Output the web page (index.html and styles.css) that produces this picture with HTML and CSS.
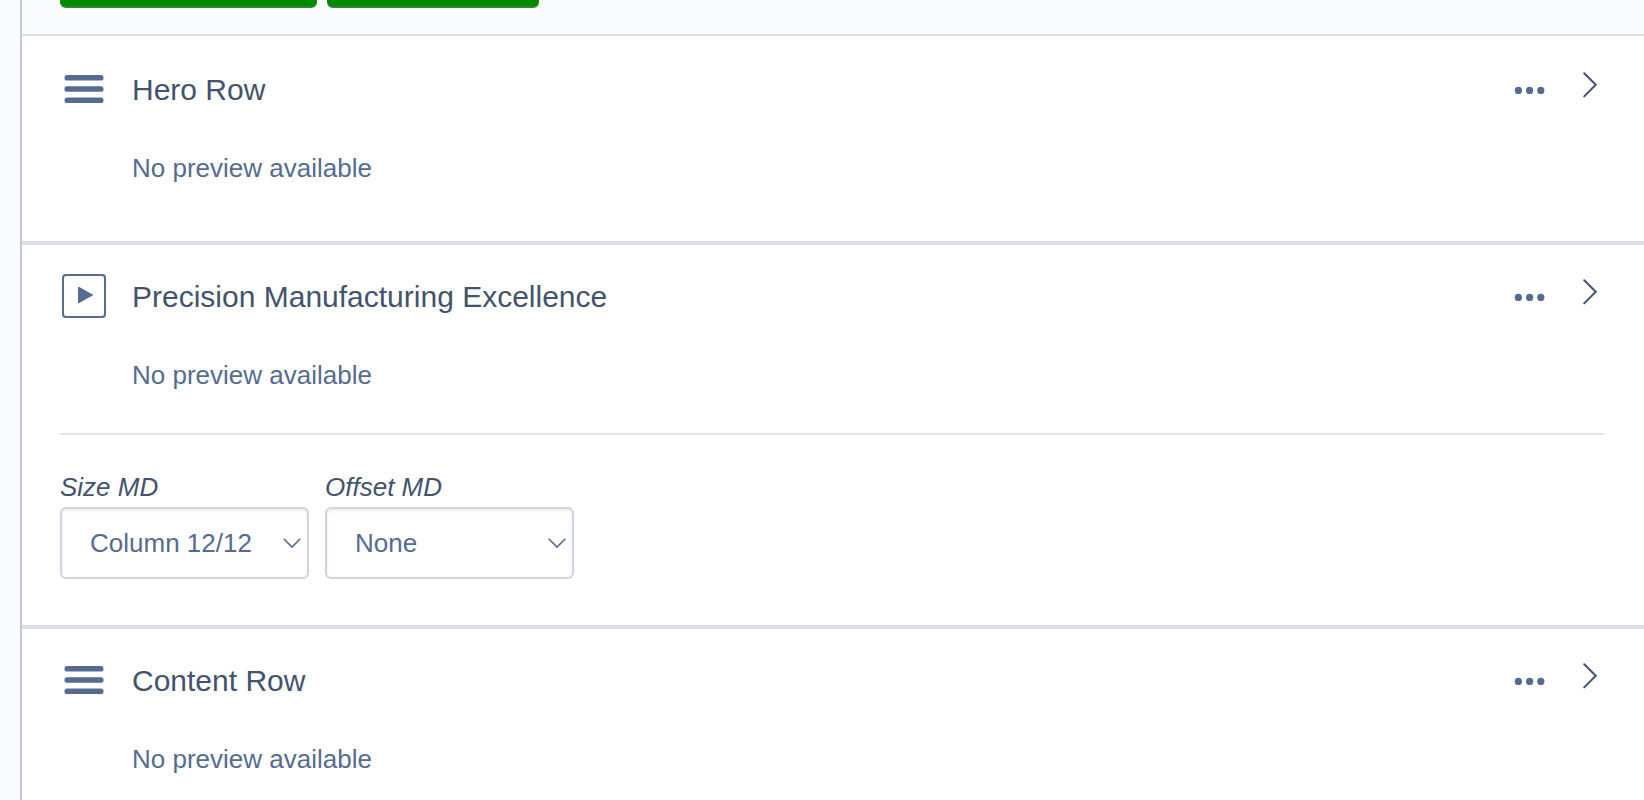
FILE: index.html
```html
<!DOCTYPE html>
<html lang="en">
<head>
    <meta charset="utf-8">
    <title>Page modules</title>
    <link rel="stylesheet" href="styles.css">
</head>

<body>
    <main class="panel">

        <div class="toolbar">
            <button type="button" class="add-button add-row" aria-label="Add row"></button>
            <button type="button" class="add-button add-module" aria-label="Add module"></button>
        </div>

        <div class="rows">

            <section class="row">
                <div class="row-head">
                    <svg class="row-icon" viewBox="0 0 48 44">
                        <rect x="4.5" y="8" width="39" height="5.6" rx="2.6"/>
                        <rect x="4.5" y="19.2" width="39" height="5.6" rx="2.6"/>
                        <rect x="4.5" y="30.4" width="39" height="5.6" rx="2.6"/>
                    </svg>
                    <h2 class="row-title">Hero Row</h2>
                    <button type="button" class="icon-button" aria-label="More">
                        <svg class="dots" viewBox="0 0 34 44">
                            <circle cx="6.4" cy="23.4" r="3.6"/>
                            <circle cx="17.6" cy="23.4" r="3.6"/>
                            <circle cx="28.8" cy="23.4" r="3.6"/>
                        </svg>
                    </button>
                    <button type="button" class="icon-button" aria-label="Open">
                        <svg class="chevron" viewBox="0 0 32 44"><path d="M12.2 6.2 L23.8 17.8 L12.2 29.4"/></svg>
                    </button>
                </div>
                <p class="preview">No preview available</p>
            </section>

            <section class="row">
                <div class="row-head">
                    <svg class="row-icon" viewBox="0 0 48 44">
                        <rect class="frame" x="3" y="1" width="42" height="42" rx="3"/>
                        <path d="M18 13.6 Q18 12.4 19.2 13 L32.6 20.4 Q33.6 21 32.6 21.6 L19.2 29 Q18 29.6 18 28.4 Z"/>
                    </svg>
                    <h2 class="row-title">Precision Manufacturing Excellence</h2>
                    <button type="button" class="icon-button" aria-label="More">
                        <svg class="dots" viewBox="0 0 34 44">
                            <circle cx="6.4" cy="23.4" r="3.6"/>
                            <circle cx="17.6" cy="23.4" r="3.6"/>
                            <circle cx="28.8" cy="23.4" r="3.6"/>
                        </svg>
                    </button>
                    <button type="button" class="icon-button" aria-label="Open">
                        <svg class="chevron" viewBox="0 0 32 44"><path d="M12.2 6.2 L23.8 17.8 L12.2 29.4"/></svg>
                    </button>
                </div>
                <p class="preview">No preview available</p>

                <div class="settings">
                    <div class="field">
                        <label for="size-md">Size MD</label>
                        <div class="select-wrap">
                            <select id="size-md">
                                <option>Column 12/12</option>
                            </select>
                            <svg class="arrow" viewBox="0 0 18 11"><path d="M1.2 1.2 L9 9 L16.8 1.2"/></svg>
                        </div>
                    </div>
                    <div class="field">
                        <label for="offset-md">Offset MD</label>
                        <div class="select-wrap">
                            <select id="offset-md">
                                <option>None</option>
                            </select>
                            <svg class="arrow" viewBox="0 0 18 11"><path d="M1.2 1.2 L9 9 L16.8 1.2"/></svg>
                        </div>
                    </div>
                </div>
            </section>

            <section class="row">
                <div class="row-head">
                    <svg class="row-icon" viewBox="0 0 48 44">
                        <rect x="4.5" y="8" width="39" height="5.6" rx="2.6"/>
                        <rect x="4.5" y="19.2" width="39" height="5.6" rx="2.6"/>
                        <rect x="4.5" y="30.4" width="39" height="5.6" rx="2.6"/>
                    </svg>
                    <h2 class="row-title">Content Row</h2>
                    <button type="button" class="icon-button" aria-label="More">
                        <svg class="dots" viewBox="0 0 34 44">
                            <circle cx="6.4" cy="23.4" r="3.6"/>
                            <circle cx="17.6" cy="23.4" r="3.6"/>
                            <circle cx="28.8" cy="23.4" r="3.6"/>
                        </svg>
                    </button>
                    <button type="button" class="icon-button" aria-label="Open">
                        <svg class="chevron" viewBox="0 0 32 44"><path d="M12.2 6.2 L23.8 17.8 L12.2 29.4"/></svg>
                    </button>
                </div>
                <p class="preview">No preview available</p>
            </section>

        </div>
    </main>
</body>

</html>
```

FILE: styles.css
```css
*{
    box-sizing:border-box;
}

body{
    margin:0;
    background-color:#fafbfd;
    color:#43536d;
    font-family:"Helvetica Neue", "Liberation Sans", Arial, sans-serif;
}

.panel{
    min-height:100vh;
    margin-left:20px;
    border-left:2px solid #c0cada;
    display:flex;
    flex-direction:column;
}

.toolbar{
    display:flex;
    gap:10px;
    padding:0 40px 26px 38px;
    border-bottom:2px solid #dae0e9;
}

.add-button{
    height:8px;
    padding:0;
    border:none;
    border-bottom:2px solid #2a8a2a;
    border-radius:0 0 6px 6px;
    background-color:#008a00;
    cursor:pointer;
}

.add-row{
    width:257px;
}

.add-module{
    width:212px;
}

.rows{
    flex:1;
    padding-top:2px;
    background-color:white;
}

.row{
    padding:29px 40px 58px 38px;
    border-bottom:4px solid #dae0e9;
}

.row:has(.settings){
    padding-bottom:46px;
}

.row:last-child{
    padding-bottom:0;
    border-bottom:none;
}

.row-head{
    display:flex;
    align-items:flex-start;
}

.row-icon{
    width:48px;
    height:44px;
    margin-right:24px;
    fill:#566b90;
}

.row-icon .frame{
    fill:none;
    stroke:#566b90;
    stroke-width:2;
}

.row-title{
    flex:1;
    margin:0;
    font-size:30px;
    font-weight:normal;
    line-height:46px;
}

.icon-button{
    display:flex;
    margin-left:26px;
    padding:0;
    border:none;
    background:none;
    cursor:pointer;
}

.dots{
    width:34px;
    height:44px;
    fill:#566b90;
}

.chevron{
    width:32px;
    height:44px;
    fill:none;
    stroke:#43536d;
    stroke-width:2;
    stroke-linecap:round;
}

.preview{
    margin:40px 0 0 72px;
    color:#566b90;
    font-size:26px;
    line-height:30px;
}

.settings{
    display:flex;
    flex-wrap:wrap;
    gap:16px;
    margin-top:43px;
    padding-top:36px;
    border-top:2px solid #e3e4e6;
}

.field label{
    display:block;
    margin-bottom:4px;
    font-size:26px;
    font-style:italic;
    line-height:32px;
}

.select-wrap{
    position:relative;
    width:249px;
}

.select-wrap select{
    display:block;
    appearance:none;
    width:100%;
    height:72px;
    padding:0 28px;
    border:2px solid #cdd4e3;
    border-radius:6px;
    background-color:white;
    box-shadow:inset 0 2px 3px rgba(0,0,0,0.08);
    color:#566b90;
    font-family:inherit;
    font-size:26px;
}

.arrow{
    position:absolute;
    top:31px;
    right:8px;
    width:18px;
    height:11px;
    fill:none;
    stroke:#566b90;
    stroke-width:1.6;
    stroke-linecap:round;
    pointer-events:none;
}
```
